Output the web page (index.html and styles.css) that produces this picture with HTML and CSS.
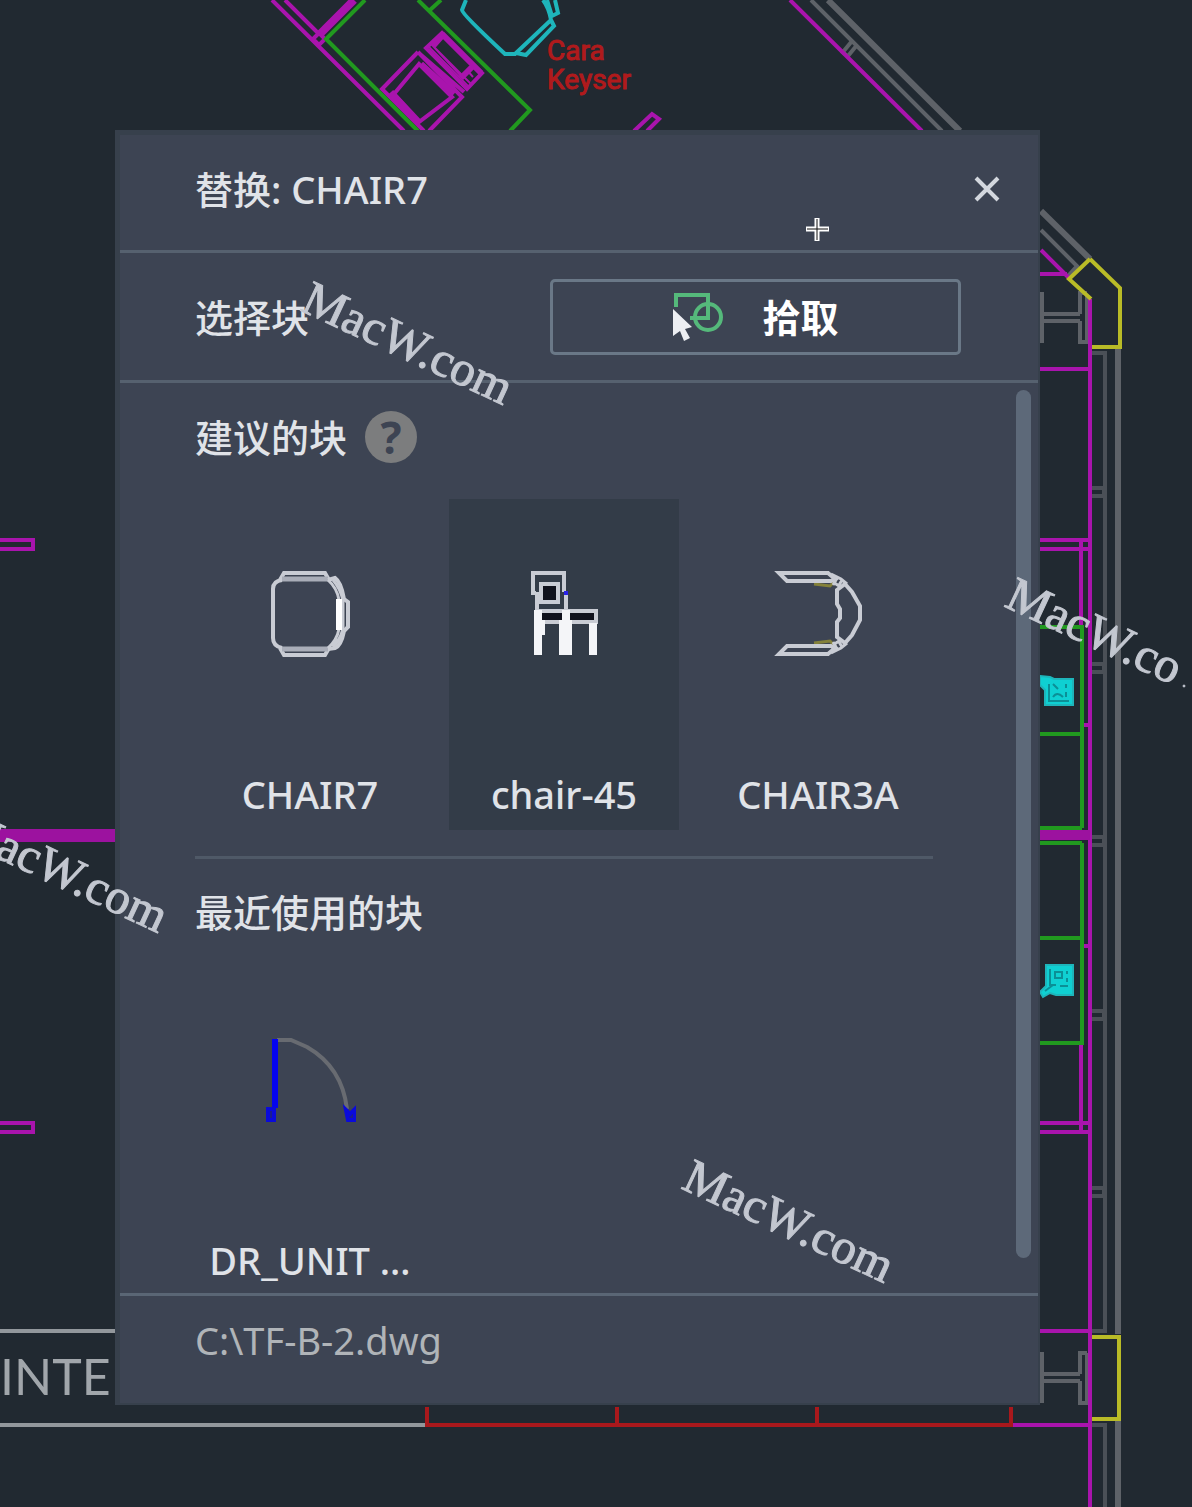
FILE: index.html
```html
<!DOCTYPE html>
<html lang="zh-CN">
<head>
  <meta charset="UTF-8" />
  <meta name="viewport" content="width=device-width, initial-scale=1.0"/>
  <title>替换: CHAIR7</title>
  <link rel="stylesheet" href="styles.css">
</head>
<body>
  <div class="workspace">
    <!-- floor plan -->
    <svg class="plan" viewBox="0 0 1192 1507" preserveAspectRatio="xMinYMin slice" aria-hidden="true">
      <g class="gray">
        <path d="M811 0L942 131M1041 230L1077 266L1068 276"/>
        <path class="wide" d="M828 0L960 131M1041 211L1090 259"/>
        <path d="M843 52L852 41M848 56L857 45M841 51L849 57"/>
        <path d="M1042 292V343M1041 314H1080M1041 321H1080M1080 314V293H1087M1080 321V342H1087V295"/>
        <path d="M1042 1352V1403M1041 1374H1080M1041 1381H1080M1080 1374V1353H1087M1080 1381V1403H1087V1353"/>
      </g>
      <g class="gray dim">
        <path d="M1092 353H1105V1331H1092M1092 1425H1105V1507"/>
        <path d="M1091 488h13v8h-13M1091 664h13v8h-13M1091 837h13v8h-13M1091 1011h13v8h-13M1091 1188h13v8h-13"/>
      </g>
      <path class="gray wide" d="M1118 349V1334M1118 1421V1507"/>

      <g class="magenta">
        <path d="M272 0L404 131M285 0L319 34"/>
        <path class="thick" d="M354 0L320 34"/>
        <path d="M313 39l6 -6l6 6l-6 6z"/>
        <path d="M442 33L482 73L467 89L426 48Z"/>
        <path class="wide" d="M442 34L481 73M441 37L433 46M472 67L461 78"/>
        <path class="thin" d="M431 44L472 85M429 47L469 87M433 46L461 76M467 70L473 77"/>
        <path d="M418 52L382 89L424 131M418 52L462 97L429 131M420 54L464 92"/>
        <path d="M419 64L394 94L419 122L452 97Z"/>
        <path class="wide" d="M421 64L454 94M391 92L419 122"/>
        <path d="M634 131L652 114L659 119L647 131M790 0L922 131"/>
        <path d="M1041 250L1069 278M1040 274H1067M1040 369H1090M1090 299V1507"/>
        <path d="M1040 540H1090M1040 549H1090M1081 540V625M1084 725H1090M1084 946H1090"/>
        <path d="M1081 1045V1132M1040 1123H1090M1040 1132H1090M1040 1331H1090M1011 1425H1090"/>
        <path d="M0 540H33V549H0M0 1123H33V1132H0"/>
      </g>
      <path class="band" d="M0 829H115V842H0ZM1040 830H1090V840H1040Z"/>

      <g class="green">
        <path d="M365 0L326 39L418 131M418 0L530 110L510 131M430 10L441 0"/>
        <path d="M1040 627H1082V828M1082 843V1043H1040M1040 734H1082M1040 828H1082M1040 843H1082M1040 938H1082"/>
      </g>

      <g class="cyan">
        <path d="M466 0L462 10Q462 14 505 54L515 54L551 20Q549 8 543 0M551 20L554 26L526 55L516 53M547 0L552 16L558 13L555 0"/>
        <path class="desk" d="M1040 676L1050 677L1054 679H1073V705H1045V690L1040 685ZM1046 965H1073V995H1056L1050 993L1043 997L1040 992L1046 986Z"/>
        <path class="desk-line" d="M1049 684V701H1069M1053 684l5 5M1066 684v4M1066 692v5M1053 697q4 -6 10 0M1050 969V985H1056M1067 971v3M1067 978v4M1060 986h8M1055 972h7v6h-7zM1045 991l8 -6"/>
      </g>

      <path class="yellow" d="M1090 259L1120 288V347H1092M1090 259L1069 279L1091 299M1092 1337H1119V1419H1092"/>
      <path class="white" d="M0 1331H115M0 1425H427"/>
      <path class="red" d="M427 1407V1425H1011V1407M617 1407V1425M817 1407V1425"/>

      <text class="owner" x="547" y="60">Cara</text>
      <text class="owner" x="547" y="89">Keyser</text>
      <text class="room" x="0" y="1395">INTE</text>
    </svg>

    <section class="dialog" role="dialog" aria-labelledby="title">
      <header class="dialog-header">
        <h1 id="title">替换: CHAIR7</h1>
        <button class="close-btn" type="button" aria-label="关闭">
          <svg width="26" height="26" viewBox="0 0 26 26"><path d="M2 2L24 24M24 2L2 24"/></svg>
        </button>
      </header>

      <div class="pick-row">
        <span id="pick-label">选择块</span>
        <button class="pick-btn" type="button" aria-describedby="pick-label">
          <svg width="52" height="50" viewBox="0 0 52 50">
            <path class="pick-shape" d="M4 15V3H36V26H18"/>
            <circle class="pick-shape" cx="36" cy="25" r="13"/>
            <path class="pick-arrow" d="M1 17L20 35L13 37L18 46L12 49L8 39L1 44Z"/>
          </svg>
          拾取
        </button>
      </div>

      <div class="blocks">
        <div class="blocks-content">
          <div class="blocks-title suggested">
            <h2>建议的块</h2>
            <button class="help-btn" type="button" aria-label="帮助">?</button>
          </div>
          <div class="block-grid">
            <button class="block" type="button">
              <svg width="92" height="92" viewBox="0 0 92 92">
                <path d="M16 12L20 5H61L65 12M16 80L20 87H61L65 80"/>
                <path class="fill-line" d="M18 11H64M18 81H64"/>
                <path d="M18 12Q9 13 9 21V70Q9 78 18 80M64 12L71 10Q77 14 80 31L84 34V59L80 63Q77 78 71 80L64 81"/>
                <path class="thin" d="M64 12Q73 20 75 32V61Q73 72 64 80M69 12Q76 20 79 32V61Q76 72 69 79"/>
                <path class="solid" d="M75 31V62"/>
              </svg>
              <span>CHAIR7</span>
            </button>
            <button class="block selected" type="button">
              <svg width="92" height="92" viewBox="0 0 92 92">
                <path d="M18 25H15V5H46V24M19 24V44M48 27V44"/>
                <rect class="hollow" x="23" y="16" width="17" height="18"/>
                <rect class="hollow" x="20" y="43" width="58" height="11"/>
                <path class="leg" d="M20 42V87M48 42V87M75 55V87"/>
                <path class="leg thin" d="M25 52V67M43 52V87M52 52V87"/>
                <path class="dot" d="M46 25H50"/>
              </svg>
              <span>chair-45</span>
            </button>
            <button class="block" type="button">
              <svg width="92" height="92" viewBox="0 0 92 92">
                <path class="yellow" d="M42 16L58 18L64 12M42 75L58 73L64 79"/>
                <path d="M7 5H56L63 11L59 13H15ZM7 86H56L63 80L59 78H15Z"/>
                <path class="thin" d="M59 6L69 11L75 16M61 14L67 18M65 10L61 17M70 12L66 19M59 85L69 80L75 75M61 77L67 73M65 81L61 74M70 79L66 72"/>
                <path d="M73 16L80 24L88 38V52L80 67L73 75L65 69V54L68 50V41L65 36V22Z"/>
              </svg>
              <span>CHAIR3A</span>
            </button>
          </div>

          <div class="blocks-title recent">
            <h2>最近使用的块</h2>
          </div>
          <div class="block-grid">
            <button class="block" type="button">
              <svg width="92" height="92" viewBox="0 0 92 92">
                <path class="swing" d="M13 6H27L43 13Q78 33 83 75"/>
                <path class="door" d="M11 5V74"/>
                <rect class="jamb" x="4" y="75" width="6" height="11"/>
                <path class="jamb" d="M82 76L86 80L91 75V86H84Z"/>
              </svg>
              <span>DR_UNIT …</span>
            </button>
          </div>
        </div>
        <div class="scroll-thumb"></div>
      </div>

      <footer class="dialog-footer">C:\TF-B-2.dwg</footer>
    </section>

    <!-- crosshair and watermarks, above the dialog -->
    <svg class="overlay" viewBox="0 0 1192 1507" preserveAspectRatio="xMinYMin slice" aria-hidden="true">
      <path class="cross-edge" d="M817 218V241M806 229H829"/>
      <path class="cross" d="M817 219V240M807 229H828"/>
      <g class="mark">
        <text transform="translate(299 310) rotate(25)">MacW.com</text>
        <text transform="translate(1003 606) rotate(25)">MacW.co</text>
        <text transform="translate(-46 838) rotate(25)">MacW.com</text>
        <text transform="translate(680 1188) rotate(25)">MacW.com</text>
        <circle cx="1184" cy="686" r="1"/>
      </g>
    </svg>
  </div>
</body>
</html>
```
FILE: styles.css
```css
* { box-sizing: border-box; }
body {
  margin: 0;
  background: #212931;
  color: #e0e3e8;
  font-family: "Noto Sans", "Noto Sans CJK SC", sans-serif;
  font-size: 38px;
  line-height: 52px;
}
h1, h2 {
  margin: 0;
  font-size: inherit;
  font-weight: 500;
}
button {
  padding: 0;
  border: none;
  background: none;
  color: inherit;
  font: inherit;
  cursor: pointer;
}
.workspace {
  position: relative;
  min-height: 100vh;
  padding: 130px 152px 100px 115px;
  overflow: hidden;
}

/* floor plan */
.plan, .overlay {
  position: absolute;
  top: 0;
  left: 0;
  width: 100%;
  height: 100%;
}
.overlay { pointer-events: none; }
.plan path {
  fill: none;
  stroke-width: 4;
}
.plan .gray { stroke: #5e6268; }
.plan .dim { stroke: #4b5057; }
.plan .wide { stroke-width: 6; }
.plan .thick { stroke-width: 8; }
.plan .thin { stroke-width: 2; }
.plan .green { stroke: #21991f; }
.plan .magenta { stroke: #a914ad; }
.plan .band { fill: #9c129f; }
.plan .cyan { stroke: #1eb5bb; }
.plan .desk { fill: #0fd0d2; stroke-width: 2; }
.plan .desk-line { stroke: #0b8f96; stroke-width: 2; }
.plan .yellow { stroke: #b9bb27; }
.plan .white { stroke: #92979c; }
.plan .red { stroke: #a9181c; }
.owner {
  fill: #b01a1c;
  stroke: #b01a1c;
  font-family: Roboto, sans-serif;
  font-size: 28px;
}
.room {
  fill: #a1a6ab;
  font-family: Lato, sans-serif;
  font-size: 50px;
}

/* dialog */
.dialog {
  position: relative;
  background: #3d4453;
  border: 5px solid #37404c;
  border-right-width: 2px;
  border-bottom-width: 2px;
}
.dialog-header {
  display: flex;
  justify-content: space-between;
  align-items: center;
  height: 115px;
  padding: 0 38px 8px 75px;
}
.close-btn { display: flex; }
.close-btn path {
  stroke: #d3d7de;
  stroke-width: 4;
}
.pick-row {
  display: flex;
  justify-content: space-between;
  align-items: center;
  height: 130px;
  padding: 0 77px 0 75px;
  border-top: 3px solid #56616f;
  font-weight: 500;
}
.pick-btn {
  display: flex;
  justify-content: center;
  align-items: center;
  gap: 38px;
  width: 411px;
  height: 76px;
  border: 3px solid #6a7887;
  border-radius: 5px;
  color: #fff;
  font-weight: 700;
}
.pick-shape {
  fill: none;
  stroke: #55b97b;
  stroke-width: 4;
}
.pick-arrow { fill: #eceef2; }

.blocks {
  display: flex;
  height: 913px;
  border-top: 3px solid #56616f;
  overflow: hidden;
}
.blocks-content {
  flex: 1;
  padding: 0 83px 0 75px;
}
.scroll-thumb {
  width: 15px;
  margin: 7px 7px 35px 0;
  border-radius: 8px;
  background: #5d6979;
}
.blocks-title {
  display: flex;
  align-items: center;
  gap: 18px;
}
.suggested {
  height: 116px;
  padding-bottom: 8px;
}
.recent {
  height: 109px;
  margin-top: 26px;
  border-top: 3px solid #4f5967;
}
.help-btn {
  width: 52px;
  height: 52px;
  border-radius: 50%;
  background: #7c7d7e;
  color: #3d4453;
  font-size: 44px;
  font-weight: 700;
}
.block-grid {
  display: grid;
  grid-template-columns: repeat(3, 1fr);
  gap: 24px;
}
.block {
  display: flex;
  flex-direction: column;
  align-items: center;
  gap: 108px;
  padding: 69px 0 10px;
  font-weight: 500;
}
.block.selected { background: #333c48; }
.block path, .block rect {
  fill: none;
  stroke: #c9ccd4;
  stroke-width: 4;
}
.block .thin { stroke-width: 3; }
.block .fill-line { stroke: #a9adb8; stroke-width: 5; }
.block .solid { stroke: #fff; stroke-width: 6; }
.block .hollow { fill: #10121c; }
.block .leg { stroke: #f4f5f8; stroke-width: 8; }
.block .leg.thin { stroke-width: 4; }
.block .dot { stroke: #2a22e8; }
.block .yellow { stroke: #84813a; stroke-width: 3; }
.block .swing { stroke: #686b71; }
.block .door { stroke: #0404f0; stroke-width: 6; }
.block .jamb { stroke: #0a0adb; fill: #1c1c90; }

.dialog-footer {
  height: 110px;
  padding: 18px 75px;
  border-top: 3px solid #5a6675;
  color: #b0b4b8;
}

/* crosshair and watermarks */
.cross-edge { stroke: #fff; stroke-width: 5; }
.cross { stroke: #111; stroke-width: 1; }
.mark {
  fill: #c3c7d0;
  stroke: #c3c7d0;
  font-family: "Liberation Serif", serif;
  font-size: 49px;
}
```
